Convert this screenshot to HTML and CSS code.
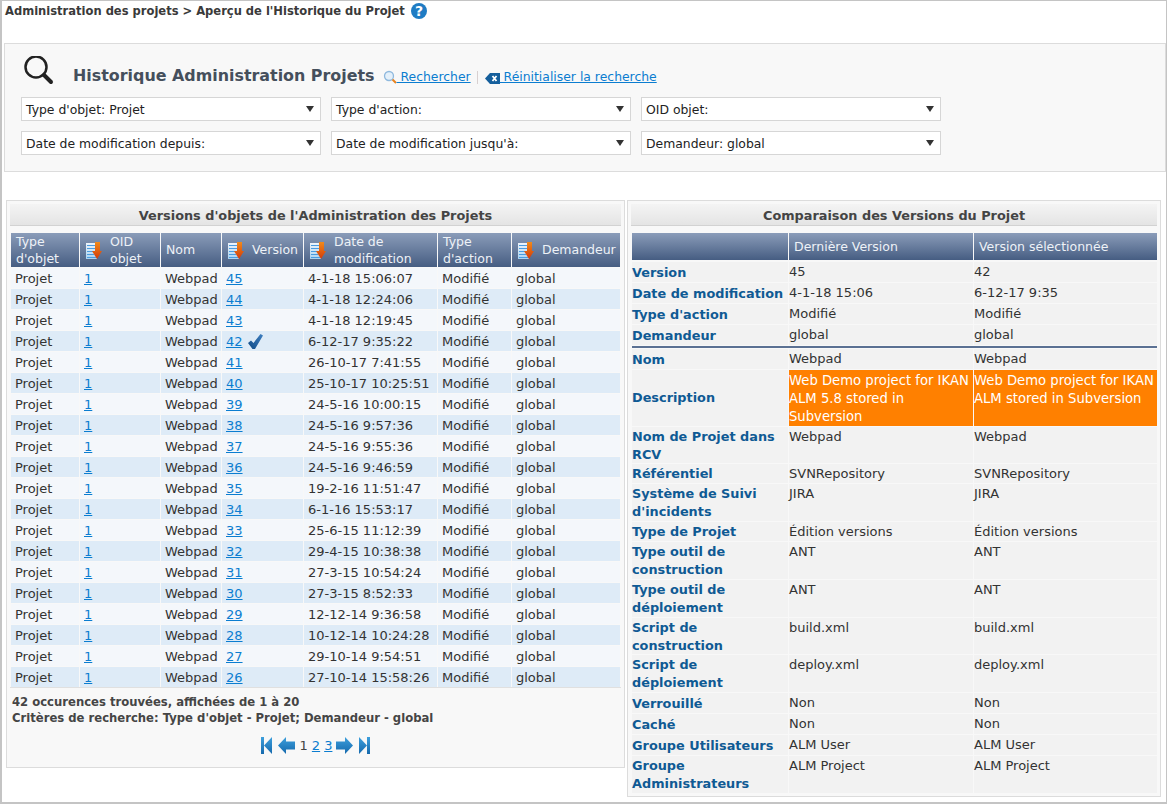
FILE: index.html
```html
<!DOCTYPE html>
<html lang="fr">
<head>
    <meta charset="UTF-8">
    <title>Historique Administration Projets</title>
    <link rel="stylesheet" href="styles.css">
</head>
<body>
<svg class="defs" width="0" height="0">
    <defs>
        <linearGradient id="docFill" x1="0" y1="0" x2="0" y2="1">
            <stop offset="0" stop-color="#eef4fa"/>
            <stop offset="1" stop-color="#a9d3f2"/>
        </linearGradient>
        <linearGradient id="redFill" x1="0" y1="0" x2="0" y2="1">
            <stop offset="0" stop-color="#f08a1a"/>
            <stop offset="1" stop-color="#d23a0a"/>
        </linearGradient>
        <linearGradient id="navFill" x1="0" y1="0" x2="0" y2="1">
            <stop offset="0" stop-color="#3d9fdc"/>
            <stop offset="1" stop-color="#1569ad"/>
        </linearGradient>
        <linearGradient id="checkFill" x1="1" y1="0" x2="0" y2="1">
            <stop offset="0" stop-color="#3f7fc0"/>
            <stop offset="1" stop-color="#0f4a86"/>
        </linearGradient>
        <symbol id="sort" viewBox="0 0 16 17">
            <rect x="0" y="1" width="11" height="16" fill="url(#docFill)"/>
            <path d="M1 3.500h9M1 6.500h9M1 9.500h7M1 12.500h7M1 15.500h9" stroke="#4a9be0" stroke-width="1"/>
            <path d="M9 0h5v9h2l-5 8-5-8h3z" fill="url(#redFill)"/>
        </symbol>
    </defs>
</svg>
<div class="page">
    <div class="crumb">
        <span>Administration des projets &gt; Aperçu de l'Historique du Projet</span>
        <svg class="help" width="16" height="16" viewBox="0 0 16 16">
            <circle cx="8" cy="8" r="8" fill="#1f7cc4"/>
            <text x="8" y="13" text-anchor="middle" class="help-mark">?</text>
        </svg>
    </div>

    <div class="search">
        <div class="search-head">
            <svg class="loupe" width="30" height="30" viewBox="0 0 30 30">
                <circle cx="12" cy="11" r="10.500" fill="none" stroke="#222" stroke-width="2.500"/>
                <path d="M20 19l7 7" stroke="#222" stroke-width="4" stroke-linecap="round"/>
            </svg>
            <h1>Historique Administration Projets</h1>
            <a class="action" href="#"><svg width="14" height="14" viewBox="0 0 14 14">
                    <circle cx="6" cy="6" r="4.500" fill="#e4f0fa" stroke="#8fb9de" stroke-width="1.300"/>
                    <path d="M9.500 9.500l3.500 3.500" stroke="#e8821e" stroke-width="2"/>
                </svg> Rechercher</a>
            <span class="sep"></span>
            <a class="action" href="#"><svg width="15" height="11" viewBox="0 0 15 11">
                    <path d="M5 0h10v11H5L0 5.500z" fill="#155f9c"/>
                    <path d="M7.500 3l4 5M11.500 3l-4 5" stroke="#fff" stroke-width="1.800"/>
                </svg> Réinitialiser la recherche</a>
        </div>
        <div class="filters">
            <div class="select">Type d'objet: Projet</div>
            <div class="select">Type d'action:</div>
            <div class="select">OID objet:</div>
            <div class="select">Date de modification depuis:</div>
            <div class="select">Date de modification jusqu'à:</div>
            <div class="select">Demandeur: global</div>
        </div>
    </div>

    <div class="columns">
        <div class="panel panel-list">
            <h2>Versions d'objets de l'Administration des Projets</h2>
            <table class="versions">
                <colgroup>
                    <col class="c1"><col class="c2"><col class="c3"><col class="c4"><col class="c5"><col class="c6"><col class="c7">
                </colgroup>
                <thead>
                    <tr>
                        <th>Type d'objet</th>
                        <th><div class="sortable"><svg class="sort-icon"><use href="#sort"/></svg><span>OID objet</span></div></th>
                        <th>Nom</th>
                        <th><div class="sortable"><svg class="sort-icon"><use href="#sort"/></svg><span>Version</span></div></th>
                        <th><div class="sortable"><svg class="sort-icon"><use href="#sort"/></svg><span>Date de modification</span></div></th>
                        <th>Type d'action</th>
                        <th><div class="sortable"><svg class="sort-icon"><use href="#sort"/></svg><span>Demandeur</span></div></th>
                    </tr>
                </thead>
                <tbody>
                    <tr><td>Projet</td><td><a href="#">1</a></td><td>Webpad</td><td><a href="#">45</a></td><td>4-1-18 15:06:07</td><td>Modifié</td><td>global</td></tr>
                    <tr><td>Projet</td><td><a href="#">1</a></td><td>Webpad</td><td><a href="#">44</a></td><td>4-1-18 12:24:06</td><td>Modifié</td><td>global</td></tr>
                    <tr><td>Projet</td><td><a href="#">1</a></td><td>Webpad</td><td><a href="#">43</a></td><td>4-1-18 12:19:45</td><td>Modifié</td><td>global</td></tr>
                    <tr><td>Projet</td><td><a href="#">1</a></td><td>Webpad</td><td><a href="#">42</a> <svg class="check" width="15" height="15" viewBox="0 0 15 15"><path d="M0 9l3-2.500 2.500 2.500L12.500 0 15 1.500 7 15H4.500z" fill="url(#checkFill)"/></svg></td><td>6-12-17 9:35:22</td><td>Modifié</td><td>global</td></tr>
                    <tr><td>Projet</td><td><a href="#">1</a></td><td>Webpad</td><td><a href="#">41</a></td><td>26-10-17 7:41:55</td><td>Modifié</td><td>global</td></tr>
                    <tr><td>Projet</td><td><a href="#">1</a></td><td>Webpad</td><td><a href="#">40</a></td><td>25-10-17 10:25:51</td><td>Modifié</td><td>global</td></tr>
                    <tr><td>Projet</td><td><a href="#">1</a></td><td>Webpad</td><td><a href="#">39</a></td><td>24-5-16 10:00:15</td><td>Modifié</td><td>global</td></tr>
                    <tr><td>Projet</td><td><a href="#">1</a></td><td>Webpad</td><td><a href="#">38</a></td><td>24-5-16 9:57:36</td><td>Modifié</td><td>global</td></tr>
                    <tr><td>Projet</td><td><a href="#">1</a></td><td>Webpad</td><td><a href="#">37</a></td><td>24-5-16 9:55:36</td><td>Modifié</td><td>global</td></tr>
                    <tr><td>Projet</td><td><a href="#">1</a></td><td>Webpad</td><td><a href="#">36</a></td><td>24-5-16 9:46:59</td><td>Modifié</td><td>global</td></tr>
                    <tr><td>Projet</td><td><a href="#">1</a></td><td>Webpad</td><td><a href="#">35</a></td><td>19-2-16 11:51:47</td><td>Modifié</td><td>global</td></tr>
                    <tr><td>Projet</td><td><a href="#">1</a></td><td>Webpad</td><td><a href="#">34</a></td><td>6-1-16 15:53:17</td><td>Modifié</td><td>global</td></tr>
                    <tr><td>Projet</td><td><a href="#">1</a></td><td>Webpad</td><td><a href="#">33</a></td><td>25-6-15 11:12:39</td><td>Modifié</td><td>global</td></tr>
                    <tr><td>Projet</td><td><a href="#">1</a></td><td>Webpad</td><td><a href="#">32</a></td><td>29-4-15 10:38:38</td><td>Modifié</td><td>global</td></tr>
                    <tr><td>Projet</td><td><a href="#">1</a></td><td>Webpad</td><td><a href="#">31</a></td><td>27-3-15 10:54:24</td><td>Modifié</td><td>global</td></tr>
                    <tr><td>Projet</td><td><a href="#">1</a></td><td>Webpad</td><td><a href="#">30</a></td><td>27-3-15 8:52:33</td><td>Modifié</td><td>global</td></tr>
                    <tr><td>Projet</td><td><a href="#">1</a></td><td>Webpad</td><td><a href="#">29</a></td><td>12-12-14 9:36:58</td><td>Modifié</td><td>global</td></tr>
                    <tr><td>Projet</td><td><a href="#">1</a></td><td>Webpad</td><td><a href="#">28</a></td><td>10-12-14 10:24:28</td><td>Modifié</td><td>global</td></tr>
                    <tr><td>Projet</td><td><a href="#">1</a></td><td>Webpad</td><td><a href="#">27</a></td><td>29-10-14 9:54:51</td><td>Modifié</td><td>global</td></tr>
                    <tr><td>Projet</td><td><a href="#">1</a></td><td>Webpad</td><td><a href="#">26</a></td><td>27-10-14 15:58:26</td><td>Modifié</td><td>global</td></tr>
                </tbody>
            </table>
            <div class="summary">
                <p>42 occurences trouvées, affichées de 1 à 20</p>
                <p>Critères de recherche: Type d'objet - Projet; Demandeur - global</p>
            </div>
            <div class="pager">
                <svg width="11" height="17" viewBox="0 0 11 17"><rect width="3" height="17" fill="url(#navFill)"/><path d="M11 0v17L3 8.500z" fill="url(#navFill)"/></svg>
                <svg class="arrow-prev" width="17" height="17" viewBox="0 0 17 17"><path d="M0 8.500L8 0v4.500h9v8H8V17z" fill="url(#navFill)"/></svg>
                <span>1</span>
                <a href="#">2</a>
                <a href="#">3</a>
                <svg class="arrow-next" width="17" height="17" viewBox="0 0 17 17"><path d="M17 8.500L9 0v4.500H0v8h9V17z" fill="url(#navFill)"/></svg>
                <svg width="11" height="17" viewBox="0 0 11 17"><path d="M0 0v17l8-8.500z" fill="url(#navFill)"/><rect x="8" width="3" height="17" fill="url(#navFill)"/></svg>
            </div>
        </div>

        <div class="panel panel-compare">
            <h2>Comparaison des Versions du Projet</h2>
            <table class="compare">
                <colgroup><col class="k"><col class="v"><col class="w"></colgroup>
                <thead>
                    <tr><th></th><th>Dernière Version</th><th>Version sélectionnée</th></tr>
                </thead>
                <tbody>
                    <tr><th>Version</th><td>45</td><td>42</td></tr>
                    <tr><th>Date de modification</th><td>4-1-18 15:06</td><td>6-12-17 9:35</td></tr>
                    <tr><th>Type d'action</th><td>Modifié</td><td>Modifié</td></tr>
                    <tr><th>Demandeur</th><td>global</td><td>global</td></tr>
                    <tr class="rule"><td colspan="3"></td></tr>
                    <tr><th>Nom</th><td>Webpad</td><td>Webpad</td></tr>
                    <tr class="diff"><th>Description</th><td>Web Demo project for IKAN ALM 5.8 stored in Subversion</td><td>Web Demo project for IKAN ALM stored in Subversion</td></tr>
                    <tr><th>Nom de Projet dans RCV</th><td>Webpad</td><td>Webpad</td></tr>
                    <tr class="tight"><th>Référentiel</th><td>SVNRepository</td><td>SVNRepository</td></tr>
                    <tr><th>Système de Suivi d'incidents</th><td>JIRA</td><td>JIRA</td></tr>
                    <tr class="tight"><th>Type de Projet</th><td>Édition versions</td><td>Édition versions</td></tr>
                    <tr><th>Type outil de construction</th><td>ANT</td><td>ANT</td></tr>
                    <tr><th>Type outil de déploiement</th><td>ANT</td><td>ANT</td></tr>
                    <tr><th>Script de construction</th><td>build.xml</td><td>build.xml</td></tr>
                    <tr><th>Script de déploiement</th><td>deploy.xml</td><td>deploy.xml</td></tr>
                    <tr><th>Verrouillé</th><td>Non</td><td>Non</td></tr>
                    <tr><th>Caché</th><td>Non</td><td>Non</td></tr>
                    <tr><th>Groupe Utilisateurs</th><td>ALM User</td><td>ALM User</td></tr>
                    <tr><th>Groupe Administrateurs</th><td>ALM Project</td><td>ALM Project</td></tr>
                </tbody>
            </table>
        </div>
    </div>
</div>
</body>
</html>
```

FILE: styles.css
```css
/* Base */
html, body {
    margin: 0;
    padding: 0;
    background: #fff;
}

body {
    font-family: "DejaVu Sans", Verdana, sans-serif;
    font-size: 13px;
    color: #333;
}

a {
    color: #0b7dd0;
}

.defs {
    display: block;
    height: 0;
}

.page {
    box-sizing: border-box;
    width: 1167px;
    height: 804px;
    border: 2px solid #c4c4c4;
    border-top-width: 1px;
    border-right-width: 1px;
    overflow: hidden;
}

/* Breadcrumb */
.crumb {
    display: flex;
    align-items: center;
    gap: 6px;
    height: 20px;
    padding-left: 3px;
    font-size: 11.520px;
    font-weight: bold;
    color: #3a3a3a;
}

.help-mark {
    font-size: 14px;
    font-weight: bold;
    fill: #fff;
}

/* Search panel */
.search {
    box-sizing: border-box;
    height: 129px;
    margin: 22px 0 0 2px;
    padding: 8px 16px 0;
    background: #f8f8f8;
    border: 1px solid #dcdcdc;
}

.search-head {
    display: flex;
    align-items: flex-end;
    height: 37px;
    font-size: 12.400px;
}

.loupe {
    margin: 0 19px 3px 3px;
}

h1 {
    margin: 0 8px 2px 0;
    font-size: 15.900px;
    line-height: 22px;
    color: #454f5c;
}

.action {
    height: 18px;
    line-height: 18px;
    margin-bottom: 3px;
}

.action svg {
    vertical-align: -3px;
}

.sep {
    width: 1px;
    height: 13px;
    margin: 0 7px 5px 6px;
    background: #d8d0d0;
}

.filters {
    display: grid;
    grid-template-columns: repeat(3, 300px);
    gap: 10px;
    margin-top: 8px;
    font-size: 12.400px;
}

.select {
    box-sizing: border-box;
    position: relative;
    height: 24px;
    padding: 1px 4px 0;
    line-height: 21px;
    background: #fff;
    border: 1px solid #d6d6d6;
    color: #222;
}

.select::after {
    content: "";
    position: absolute;
    right: 6px;
    top: 8px;
    border: 4px solid transparent;
    border-top: 6px solid #333;
    border-bottom: 0;
}

/* Panels */
.columns {
    display: flex;
    align-items: flex-start;
    gap: 2px;
    margin: 28px 0 0 4px;
}

.panel {
    box-sizing: border-box;
    padding: 3px 3px 0;
    background: #f8f8f8;
    border: 1px solid #dcdcdc;
}

.panel-list {
    width: 619px;
    height: 568px;
}

.panel-compare {
    width: 534px;
    height: 597px;
}

h2 {
    margin: 0;
    height: 20px;
    padding-top: 1px;
    font-size: 12.850px;
    line-height: 21px;
    text-align: center;
    color: #444;
    background: linear-gradient(#f4f4f4, #e4e4e4);
    border-bottom: 1px solid #d2d2d2;
}

table {
    border-collapse: separate;
    border-spacing: 0;
    table-layout: fixed;
    margin: 7px 0 0 1px;
}

thead th {
    padding: 1px 4px 0 5px;
    font-size: 12.500px;
    font-weight: normal;
    text-align: left;
    line-height: 16.500px;
    color: #eef2f7;
    background: linear-gradient(#8a9cb9, #465d82);
    border-right: 1px solid #f8f8f8;
}

thead th:last-child {
    border-right: 0;
}

/* Left table */
.versions {
    width: 609px;
}

.c1 { width: 69px; }
.c2 { width: 81px; }
.c3 { width: 61px; }
.c4 { width: 82px; }
.c5 { width: 134px; }
.c6 { width: 74px; }
.c7 { width: 108px; }

.versions thead tr {
    height: 34px;
}

.versions tbody tr {
    height: 21px;
    background: #f4f7fb;
}

.versions tbody tr:nth-child(even) {
    background: #deebf7;
}

.versions td {
    box-sizing: border-box;
    height: 21px;
    padding: 0 4px;
    line-height: 17px;
    white-space: nowrap;
    border-right: 1px solid #f8f8f8;
    border-top: 1px solid #f8f8f8;
}

.versions td:last-child {
    border-right: 0;
}

.sortable {
    display: flex;
    align-items: center;
    gap: 8px;
    padding-left: 1px;
}

.sort-icon {
    flex: none;
    width: 16px;
    height: 17px;
}

.check {
    margin-left: 1px;
    vertical-align: -3px;
}

.summary {
    padding: 6px 2px 0;
    border-top: 1px solid #e0e0e0;
    font-size: 11.640px;
    font-weight: bold;
    color: #454545;
}

.summary p {
    margin: 0;
    line-height: 16px;
}

.pager {
    display: flex;
    justify-content: center;
    align-items: center;
    gap: 4px;
    margin-top: 11px;
    color: #444;
}

.arrow-prev {
    margin: 0 1px 0 2px;
}

.arrow-next {
    margin: 0 2px 0 0;
}

/* Right table */
.compare {
    width: 525px;
}

.k { width: 157px; }
.v { width: 185px; }
.w { width: 183px; }

.compare thead tr {
    height: 29px;
}

.compare thead th {
    border-bottom: 2px solid #f8f8f8;
}

.compare tbody tr {
    height: 21px;
}

.compare tbody th {
    padding: 1px 0 0;
    font-size: 12.850px;
    font-weight: bold;
    text-align: left;
    line-height: 17.875px;
    color: #0f5a94;
    background: #f2f2f2;
    border-right: 1px solid #f8f8f8;
    border-bottom: 1px solid #f8f8f8;
}

.compare td {
    padding: 1px 0 0;
    vertical-align: top;
    line-height: 17.875px;
    background: #f2f2f2;
    border-right: 1px solid #f8f8f8;
    border-bottom: 1px solid #f8f8f8;
}

.compare td:last-child {
    border-right: 0;
}

.compare .rule {
    height: 3px;
}

.compare .rule td {
    height: 2px;
    padding: 0;
    line-height: 0;
    background: #5b7193;
}

.compare .tight {
    height: 20px;
}

.compare .diff td {
    padding-top: 2px;
    font-size: 13.200px;
    color: #fff;
    background: #ff8000;
}
```
